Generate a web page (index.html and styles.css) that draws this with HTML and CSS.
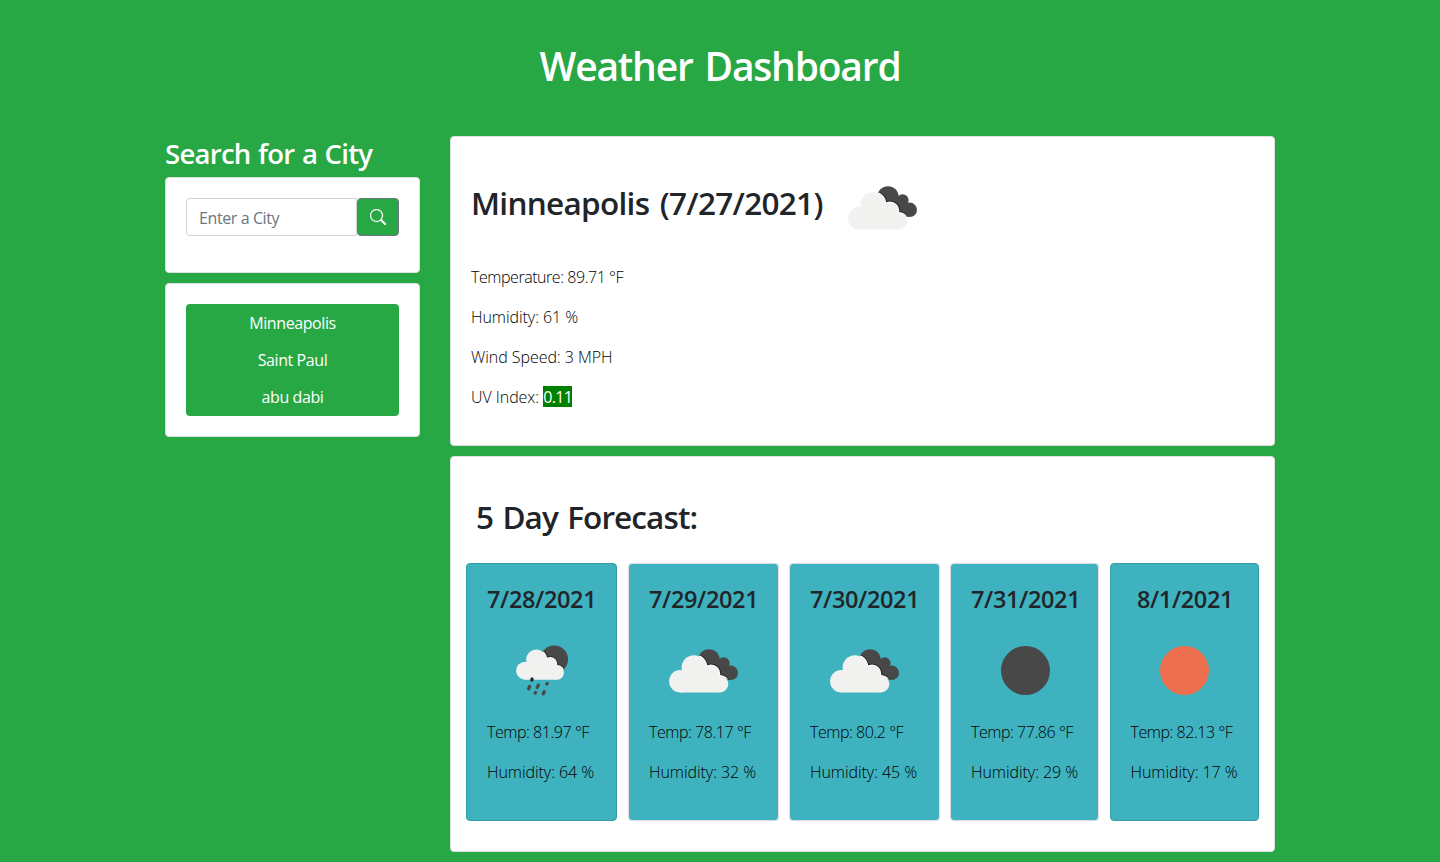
FILE: index.html
```html
<!DOCTYPE html>
<html lang="en">
<head>
<meta charset="utf-8">
<title>Weather Dashboard</title>
<link rel="stylesheet" href="styles.css">
</head>
<body>
<svg class="defs" aria-hidden="true">
  <defs>
    <g id="cloud-back"><circle cx="40" cy="10.9" r="10.7"/><circle cx="54.6" cy="14.3" r="6"/><circle cx="61.7" cy="23.8" r="7.3"/><path d="M40 11L54 12L62 24L56 31L40 25z"/></g>
    <g id="cloud-front"><circle cx="11.4" cy="32.2" r="11.3"/><circle cx="25" cy="18.6" r="12.4"/><circle cx="42" cy="24.9" r="8.3"/><circle cx="51" cy="35.2" r="8.3"/><path d="M11 25L25 18L42 24L51 30V43.5H11z"/></g>
    <clipPath id="back-clip"><circle cx="40" cy="10.9" r="10.7"/><circle cx="54.6" cy="14.3" r="6"/><circle cx="61.7" cy="23.8" r="7.3"/><path d="M40 11L54 12L62 24L56 31L40 25z"/></clipPath>
    <symbol id="clouds" viewBox="0 0 70 44">
      <use href="#cloud-back" fill="#484849"/>
      <g clip-path="url(#back-clip)"><use href="#cloud-front" stroke="#252526" stroke-width="4"/><use href="#cloud-front" stroke="#fff" stroke-width="2"/></g>
      <use href="#cloud-front" fill="#f1f1f0"/>
    </symbol>
    <g id="rain-front"><circle cx="9.1" cy="25.7" r="9"/><circle cx="20.3" cy="14.8" r="10.2"/><circle cx="34.2" cy="19" r="6.3"/><circle cx="41" cy="27.7" r="7"/><path d="M9 20L20 14L34 18L41 23V34.7H9z"/></g>
    <clipPath id="rain-clip"><circle cx="38.2" cy="14.2" r="13.8"/></clipPath>
    <symbol id="rain" viewBox="0 0 52 51">
      <circle cx="38.2" cy="14.2" r="13.8" fill="#484849"/>
      <g clip-path="url(#rain-clip)"><use href="#rain-front" stroke="#252526" stroke-width="3"/><use href="#rain-front" stroke="#fff" stroke-width="1.4"/></g>
      <use href="#rain-front" fill="#f1f1f0"/>
      <g stroke="#484849" stroke-width="3.2" stroke-linecap="round"><path d="M16.1 34L15.8 35" stroke="#252526"/><path d="M13.6 41.4L12.6 43.8M22.3 40.1L21.3 42.5M31.2 38.5L30.8 39M19.5 47.5L19.2 48M28.2 46.6L27.2 48.9"/></g>
    </symbol>
  </defs>
</svg>
<header class="header"><h1 class="title">Weather Dashboard</h1></header>
<div class="container">
  <aside class="sidebar">
    <h3 class="search-title">Search for a City</h3>
    <section class="card search-card">
      <form class="search">
        <input class="search-input" type="text" placeholder="Enter a City">
        <button class="search-button" type="button" aria-label="Search"><svg width="16" height="16" viewBox="0 0 16 16" fill="currentColor" stroke="currentColor" stroke-width=".25"><path d="M11.742 10.344a6.5 6.5 0 1 0-1.397 1.398h-.001c.03.04.062.078.098.115l3.85 3.85a1 1 0 0 0 1.415-1.414l-3.85-3.85a1.007 1.007 0 0 0-.115-.1zM12 6.5a5.5 5.5 0 1 1-11 0 5.5 5.5 0 0 1 11 0z"/></svg></button>
      </form>
    </section>
    <section class="card history-card">
      <div class="history"><span>Minneapolis</span><span>Saint Paul</span><span>abu dabi</span></div>
    </section>
  </aside>
  <main class="main">
    <section class="card current">
      <div class="current-head"><h2 class="city">Minneapolis (7/27/2021)</h2><svg class="clouds"><use href="#clouds"/></svg></div>
      <p class="text">Temperature: 89.71 °F</p>
      <p class="text loose">Humidity: 61 %</p>
      <p class="text loose">Wind Speed: 3 MPH</p>
      <p class="text loose">UV Index: <span class="uv">0.11</span></p>
    </section>
    <section class="card forecast">
      <h2 class="forecast-title">5 Day Forecast:</h2>
      <div class="days">
        <article class="day day-info"><h4 class="date">7/28/2021</h4><div class="icon"><svg class="rain"><use href="#rain"/></svg></div><p class="text">Temp: 81.97 °F</p><p class="text loose">Humidity: 64 %</p></article>
        <article class="day"><h4 class="date">7/29/2021</h4><div class="icon"><svg class="clouds"><use href="#clouds"/></svg></div><p class="text">Temp: 78.17 °F</p><p class="text loose">Humidity: 32 %</p></article>
        <article class="day"><h4 class="date">7/30/2021</h4><div class="icon"><svg class="clouds"><use href="#clouds"/></svg></div><p class="text">Temp: 80.2 °F</p><p class="text loose">Humidity: 45 %</p></article>
        <article class="day day-narrow"><h4 class="date">7/31/2021</h4><div class="icon"><span class="disc night"></span></div><p class="text">Temp: 77.86 °F</p><p class="text loose">Humidity: 29 %</p></article>
        <article class="day day-info day-last"><h4 class="date">8/1/2021</h4><div class="icon"><span class="disc sun"></span></div><p class="text">Temp: 82.13 °F</p><p class="text loose">Humidity: 17 %</p></article>
      </div>
    </section>
  </main>
</div>
</body>
</html>
```
FILE: styles.css
```css
* { box-sizing: border-box; }
body { margin: 0; height: 862px; overflow: hidden; background: #28a745; color: #212529; font: 400 16px/24px "Open Sans", "Noto Sans", sans-serif; letter-spacing: -0.4px; }
h1, h2, h3, h4, p { margin: 0; white-space: nowrap; }
h1, h2, h3, h4 { font-weight: 600; }
.defs { position: absolute; width: 0; height: 0; }
.header { height: 136px; padding-top: 42px; text-align: center; color: #fff; }
.title { font-size: 39px; line-height: 48px; letter-spacing: -1.2px; word-spacing: 3px; }
.container { display: grid; grid-template-columns: 255px 825px; gap: 30px; width: 1110px; margin: 0 auto; }
.card { background: #fff; border: 1px solid #dfdfdf; border-radius: 4px; }
.search-title { height: 41px; padding-top: 1px; color: #fff; font-size: 27.5px; line-height: 34px; letter-spacing: -0.72px; word-spacing: 1px; }
.search-card { height: 96px; padding: 20px; }
.search { display: flex; height: 38px; }
.search-input { width: 171px; height: 38px; padding: 8px 12px 6px; border: 1px solid #ced4da; border-radius: 4px 0 0 4px; color: #495057; font: inherit; letter-spacing: inherit; }
.search-input::placeholder { color: #6c757d; opacity: 1; }
.search-button { display: flex; align-items: center; justify-content: center; width: 42px; height: 38px; padding: 0; border: 1px solid #6c757d; border-radius: 4px; background: #28a745; color: #fff; }
.history-card { height: 154px; margin-top: 10px; padding: 20px; }
.history { display: flex; flex-direction: column; height: 112px; border-radius: 4px; background: #28a745; color: #fff; text-align: center; }
.history span { height: 37px; line-height: 39px; }
.current { height: 310px; padding: 48px 20px 0; }
.current-head { display: flex; gap: 25px; height: 80px; }
.city { width: 352px; font-size: 31.5px; line-height: 36px; letter-spacing: -0.7px; word-spacing: 3px; }
.clouds { width: 70px; height: 44px; margin-top: 1px; }
.text { margin-bottom: 16px; color: #000; font-weight: 300; letter-spacing: -0.45px; }
.loose { letter-spacing: -0.05px; }
.uv { display: inline-block; width: 29px; height: 21px; line-height: 23px; background: green; color: #fff; font-weight: 400; letter-spacing: -0.6px; vertical-align: top; margin-top: 1px; }
.forecast { height: 396px; margin-top: 10px; padding: 42px 15px 0; }
.forecast-title { height: 64px; padding-left: 10px; font-size: 31.5px; line-height: 36px; letter-spacing: -0.9px; word-spacing: 2px; }
.days { display: flex; gap: 10px; width: 793px; }
.day { width: 151px; height: 258px; padding: 21px 0 0 20px; border: 1px solid #dfdfdf; border-radius: 4px; background: #3eb2bf; }
.day:nth-child(2) { margin-left: 1px; }
.day-narrow, .day-last { width: 149px; }
.day-last { margin-left: auto; padding-left: 19.5px; }
.day-info { border-color: #319da9; }
.date { width: 109px; font-size: 23.5px; line-height: 28px; letter-spacing: -0.35px; text-align: center; }
.icon { display: flex; align-items: center; justify-content: center; width: 110px; height: 107px; padding-top: 7px; }
.rain { width: 52px; height: 51px; }
.disc { width: 49px; height: 49px; margin-right: 2px; border-radius: 50%; }
.night { background: #484849; }
.sun { background: #ec6e4c; }
```
